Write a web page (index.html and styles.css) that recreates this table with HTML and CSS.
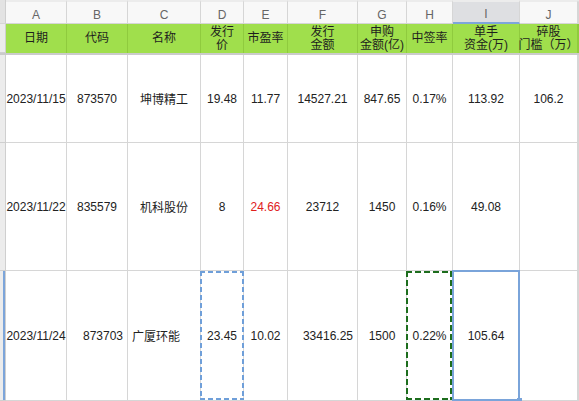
FILE: index.html
```html
<!DOCTYPE html>
<html lang="zh-CN">
<head>
<meta charset="utf-8">
<title>新股申购</title>
<link rel="stylesheet" href="styles.css">
</head>
<body>
<div class="sheet">
  <div class="c corner"></div>
  <div class="c colh">A</div>
  <div class="c colh">B</div>
  <div class="c colh">C</div>
  <div class="c colh">D</div>
  <div class="c colh">E</div>
  <div class="c colh">F</div>
  <div class="c colh">G</div>
  <div class="c colh">H</div>
  <div class="c colh colh-sel">I</div>
  <div class="c colh">J</div>
  <div class="c colh"></div>

  <div class="c gut"></div>
  <div class="c hd">日期</div>
  <div class="c hd">代码</div>
  <div class="c hd">名称</div>
  <div class="c hd">发行<br>价</div>
  <div class="c hd">市盈率</div>
  <div class="c hd">发行<br>金额</div>
  <div class="c hd">申购<br>金额(亿)</div>
  <div class="c hd">中签率</div>
  <div class="c hd">单手<br>资金(万)</div>
  <div class="c hd">碎股<br>门槛（万）</div>
  <div class="c hd hd-k"></div>

  <div class="band"></div>

  <div class="c gut"></div>
  <div class="c">2023/11/15</div>
  <div class="c">873570</div>
  <div class="c">坤博精工</div>
  <div class="c">19.48</div>
  <div class="c">11.77</div>
  <div class="c">14527.21</div>
  <div class="c">847.65</div>
  <div class="c">0.17%</div>
  <div class="c">113.92</div>
  <div class="c">106.2</div>
  <div class="c"></div>

  <div class="c gut"></div>
  <div class="c">2023/11/22</div>
  <div class="c">835579</div>
  <div class="c">机科股份</div>
  <div class="c">8</div>
  <div class="c red">24.66</div>
  <div class="c">23712</div>
  <div class="c">1450</div>
  <div class="c">0.16%</div>
  <div class="c">49.08</div>
  <div class="c"></div>
  <div class="c"></div>

  <div class="c gut gut-sel"></div>
  <div class="c">2023/11/24</div>
  <div class="c right">873703</div>
  <div class="c left">广厦环能</div>
  <div class="c copy-blue">23.45</div>
  <div class="c">10.02</div>
  <div class="c right">33416.25</div>
  <div class="c">1500</div>
  <div class="c copy-green">0.22%</div>
  <div class="c active">105.64<span class="handle"></span></div>
  <div class="c"></div>
  <div class="c"></div>
</div>
</body>
</html>
```

FILE: styles.css
```css
html, body {
  margin: 0;
  padding: 0;
}
body {
  width: 579px;
  height: 401px;
  overflow: hidden;
  background: #ffffff;
  font-family: "Liberation Sans", Arial, "Noto Sans CJK SC", sans-serif;
  font-size: 12px;
  color: #222222;
}
.sheet {
  display: grid;
  grid-template-columns: 6px 61px 61px 73px 43px 44px 70px 49px 46px 67px 58px 1fr;
  grid-template-rows: 24px 29px 2px 88px 128px 130px;
}
.c {
  box-sizing: border-box;
  border-right: 1px solid #d6d6d6;
  border-bottom: 1px solid #d6d6d6;
  display: flex;
  align-items: center;
  justify-content: center;
  white-space: nowrap;
  position: relative;
  min-width: 0;
}
.right {
  justify-content: flex-end;
  padding-right: 4px;
}
.left {
  justify-content: flex-start;
  padding-left: 4px;
}
.red {
  color: #e0201c;
}
.corner {
  background: #e3e3e3;
  border-right-color: #cfcfcf;
}
.colh {
  background: #f8f8f8;
  color: #666666;
  padding-top: 4px;
  border-top: 2px solid #ececec;
  font-size: 12px;
}
.colh-sel {
  background: #dedfe2;
  border-bottom: 2px solid #7ea6da;
}
.gut {
  background: #ececec;
  border-right-color: #cfcfcf;
  border-bottom-color: #cfcfcf;
}
.gut-sel {
  box-shadow: inset -2px 0 0 #7ca5da;
}
.hd {
  background: #a0df4c;
  border-right-color: #8fcb3e;
  border-bottom: none;
  line-height: 13px;
  text-align: center;
  color: #1e1e1e;
}
.hd-k {
  background: #a0df4c;
}
.band {
  grid-column: 1 / -1;
  background: #cbcbcb;
}
.copy-blue::after,
.copy-green::after {
  content: "";
  position: absolute;
  top: 0;
  bottom: 0;
  left: -1px;
  right: -1px;
  pointer-events: none;
}
.copy-blue::after {
  --dc: #6f9fd9;
  background:
    repeating-linear-gradient(90deg, var(--dc) 0 5px, transparent 5px 8px) top left / 100% 2px no-repeat,
    repeating-linear-gradient(90deg, var(--dc) 0 5px, transparent 5px 8px) bottom left / 100% 2px no-repeat,
    repeating-linear-gradient(180deg, var(--dc) 0 5px, transparent 5px 8px) top left / 2px 100% no-repeat,
    repeating-linear-gradient(180deg, var(--dc) 0 5px, transparent 5px 8px) top right / 2px 100% no-repeat;
}
.copy-green::after {
  --dc: #1d6d1d;
  right: 0;
  background:
    repeating-linear-gradient(90deg, var(--dc) 0 6px, transparent 6px 9px) top left / 100% 2px no-repeat,
    repeating-linear-gradient(90deg, var(--dc) 0 6px, transparent 6px 9px) bottom left / 100% 2px no-repeat,
    repeating-linear-gradient(180deg, var(--dc) 0 6px, transparent 6px 9px) top left / 2px 100% no-repeat,
    repeating-linear-gradient(180deg, var(--dc) 0 6px, transparent 6px 9px) top right / 2px 100% no-repeat;
}
.active::after {
  content: "";
  position: absolute;
  top: -1px;
  left: -1px;
  right: -1px;
  bottom: -1px;
  border: 2px solid #7aa4da;
  pointer-events: none;
}
.handle {
  position: absolute;
  right: -3px;
  bottom: -3px;
  width: 5px;
  height: 5px;
  background: #7aa4da;
  z-index: 2;
}
```
